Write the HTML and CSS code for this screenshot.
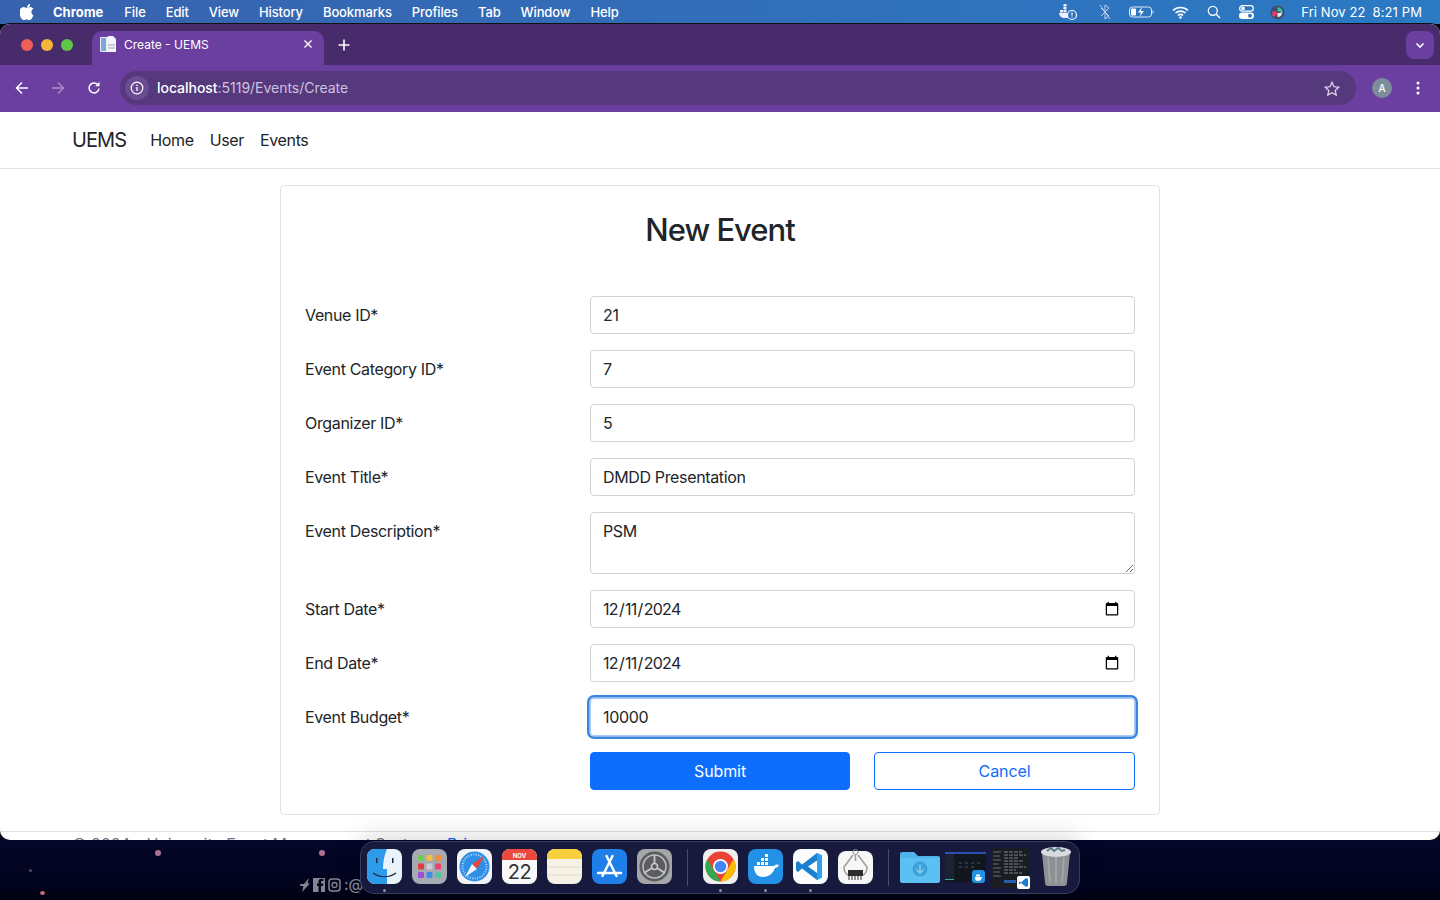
FILE: index.html
```html
<!DOCTYPE html>
<html lang="en">
<head>
    <meta charset="UTF-8">
    <title>Create - UEMS</title>
    <link rel="stylesheet" href="styles.css">
</head>
<body>
    <div class="menubar">
        <svg class="apple" viewBox="0 0 14 16" width="14" height="16"><path fill="#fff" d="M10.2 0c.1 1-.3 1.900-.8 2.600-.6.700-1.500 1.200-2.400 1.100-.1-.9.300-1.900.9-2.500C8.400.500 9.400 0 10.200 0zM13.400 11.600c-.4.900-.6 1.300-1.100 2.100-.7 1.100-1.700 2.400-2.900 2.400-1.100 0-1.400-.7-2.800-.7-1.500 0-1.800.7-2.900.7-1.200 0-2.100-1.200-2.800-2.300C-.9 10.700-1 7 .2 5.100 1 3.800 2.400 3.100 3.700 3.100c1.300 0 2.200.8 3.300.8 1 0 1.700-.8 3.200-.8 1.100 0 2.400.6 3.200 1.700-2.800 1.500-2.400 5.500 0 6.800z"/></svg>
        <span class="menu-app">Chrome</span>
        <span class="menu-item">File</span>
        <span class="menu-item">Edit</span>
        <span class="menu-item">View</span>
        <span class="menu-item">History</span>
        <span class="menu-item">Bookmarks</span>
        <span class="menu-item">Profiles</span>
        <span class="menu-item">Tab</span>
        <span class="menu-item">Window</span>
        <span class="menu-item">Help</span>
        <div class="status">
            <svg width="20" height="18" viewBox="0 0 20 18"><g fill="#eef"><rect x="2" y="7" width="3" height="2.500"/><rect x="5.500" y="7" width="3" height="2.500"/><rect x="5.500" y="4" width="3" height="2.500"/><rect x="5.500" y="1" width="3" height="2.500"/><path d="M1 10h11c-.5 3-1 5-5 5-4 0-5.500-2-6-5z"/></g><circle cx="14" cy="12" r="4.500" fill="#2f72bd" stroke="#fff" stroke-width="1.200"/><path d="M14 9.500v3M14 13.800v.9" stroke="#fff" stroke-width="1.200"/></svg>
            <svg class="st-bt" width="12" height="16" viewBox="0 0 12 16"><path d="M2 4l8 8-4 3V1l4 3-8 8M1 1l10 14" fill="none" stroke="#bcd0e8" stroke-width="1"/></svg>
            <svg class="st-bat" width="26" height="12" viewBox="0 0 26 12"><rect x=".5" y="1" width="22" height="10" rx="3" fill="none" stroke="#dce8f5"/><rect x="2" y="2.500" width="5" height="7" rx="1" fill="#fff"/><path d="M24 4.500v3" stroke="#dce8f5"/><path d="M13 1l-4 5.500h3L10.500 11l4.500-6h-3z" fill="#fff"/></svg>
            <svg class="st-wifi" width="17" height="13" viewBox="0 0 17 13"><path d="M1 4.500c4-4 11-4 15 0M3.500 7c2.800-2.600 7.200-2.600 10 0M6 9.500c1.400-1.200 3.600-1.200 5 0" fill="none" stroke="#fff" stroke-width="1.700"/><circle cx="8.500" cy="11.500" r="1.300" fill="#fff"/></svg>
            <svg class="st-search" width="14" height="14" viewBox="0 0 14 14"><circle cx="5.800" cy="5.800" r="4.500" fill="none" stroke="#fff" stroke-width="1.300"/><path d="M9 9l4 4" stroke="#fff" stroke-width="1.500"/></svg>
            <svg class="st-ctl" width="15" height="14" viewBox="0 0 15 14"><rect x=".7" y=".7" width="13.600" height="5.400" rx="2.700" fill="none" stroke="#fff" stroke-width="1.200"/><circle cx="4" cy="3.400" r="1.800" fill="#fff"/><rect y="7.500" width="15" height="6.500" rx="3.200" fill="#fff"/><circle cx="11" cy="10.700" r="1.900" fill="#2f72bd"/></svg>
            <svg class="st-siri" width="15" height="15" viewBox="0 0 15 15"><circle cx="7.500" cy="7.500" r="7" fill="#3d4f6e"/><path d="M7.500 2.500c3 0 5 2 5 4.500-2 1-3.500-.5-5-1z" fill="#3fbf9f"/><path d="M2 7c2-2 4-1 5.500 1-1 2.500-3 4.500-5 3z" fill="#e0406a"/><path d="M7.500 8c2 0 3.500 0 5-1-.5 3-2 5-5 5z" fill="#e9e4ee"/></svg>
            <span class="st-clock">Fri Nov 22</span>
            <span class="st-time">8:21 PM</span>
        </div>
    </div>

    <div class="window">
        <div class="tabstrip">
            <div class="lights"><i class="red"></i><i class="yellow"></i><i class="green"></i></div>
            <div class="tab">
                <svg width="16" height="16" viewBox="0 0 16 16"><rect x="0" y="1" width="14" height="15" rx="1" fill="#e8edf5"/><rect x="1" y="2" width="5" height="13" fill="#7fa8d8"/><path d="M9 0h4l3 3v13H7V1z" fill="#f4f5f8"/><rect x="8" y="8" width="7" height="2" fill="#c6cdd8"/><rect x="8" y="11" width="7" height="2" fill="#c6cdd8"/></svg>
                <span class="tab-title">Create - UEMS</span>
                <svg class="tab-close" width="10" height="10" viewBox="0 0 10 10"><path d="M1.500 1.500l7 7M8.500 1.500l-7 7" stroke="#fff" stroke-width="1.400"/></svg>
            </div>
            <svg class="new-tab" width="12" height="12" viewBox="0 0 12 12"><path d="M6 .5v11M.5 6h11" stroke="#fff" stroke-width="1.600"/></svg>
            <div class="tab-search"><svg width="10" height="7" viewBox="0 0 10 7"><path d="M1.500 1.500L5 5l3.500-3.500" fill="none" stroke="#fff" stroke-width="1.600"/></svg></div>
        </div>
        <div class="toolbar">
            <svg class="tool" width="14" height="14" viewBox="0 0 14 14"><path d="M13 7H2M7 1.500L1.500 7 7 12.500" fill="none" stroke="#fff" stroke-width="1.500"/></svg>
            <svg class="tool dim" width="14" height="14" viewBox="0 0 14 14"><path d="M1 7h11M7 1.500L12.500 7 7 12.500" fill="none" stroke="#a98bcb" stroke-width="1.500"/></svg>
            <svg class="tool" width="14" height="14" viewBox="0 0 14 14"><path d="M12 7.500A5 5 0 1 1 10.500 3.300" fill="none" stroke="#fff" stroke-width="1.500"/><path d="M12.500 .8v4.400H8.100z" fill="#fff"/></svg>
            <div class="omnibox">
                <span class="info"><svg width="14" height="14" viewBox="0 0 14 14"><circle cx="7" cy="7" r="5.800" fill="none" stroke="#fff" stroke-width="1.200"/><path d="M7 6v4" stroke="#fff" stroke-width="1.300"/><circle cx="7" cy="4.200" r=".8" fill="#fff"/></svg></span>
                <span class="url"><b>localhost</b>:5119/Events/Create</span>
                <svg class="star" width="16" height="15" viewBox="0 0 16 15"><path d="M8 1.300l2 4.400 4.700.5-3.500 3.200 1 4.700L8 11.700l-4.200 2.400 1-4.700L1.300 6.200 6 5.700z" fill="none" stroke="#dcd2e8" stroke-width="1.300"/></svg>
            </div>
            <span class="avatar">A</span>
            <svg class="kebab" width="4" height="14" viewBox="0 0 4 14"><circle cx="2" cy="2" r="1.500" fill="#fff"/><circle cx="2" cy="7" r="1.500" fill="#fff"/><circle cx="2" cy="12" r="1.500" fill="#fff"/></svg>
        </div>

        <div class="page">
            <nav class="navbar">
                <a class="brand">UEMS</a>
                <a class="nav-link">Home</a>
                <a class="nav-link">User</a>
                <a class="nav-link">Events</a>
            </nav>
            <main class="card">
                <h2 class="card-title">New Event</h2>
                <form class="event-form">
                    <label>Venue ID*</label>
                    <input class="field" type="text" value="21">
                    <label>Event Category ID*</label>
                    <input class="field" type="text" value="7">
                    <label>Organizer ID*</label>
                    <input class="field" type="text" value="5">
                    <label>Event Title*</label>
                    <input class="field" type="text" value="DMDD Presentation">
                    <label>Event Description*</label>
                    <textarea class="field area">PSM</textarea>
                    <label>Start Date*</label>
                    <input class="field date" type="date" value="2024-12-11">
                    <label>End Date*</label>
                    <input class="field date" type="date" value="2024-12-11">
                    <label>Event Budget*</label>
                    <input class="field focused" type="text" value="10000">
                    <div class="actions">
                        <button type="button" class="btn btn-submit">Submit</button>
                        <button type="button" class="btn btn-cancel">Cancel</button>
                    </div>
                </form>
            </main>
            <footer class="page-footer">© 2024 - University Event Management System - <a>Privacy</a></footer>
        </div>
    </div>

    <div class="desktop">
        <i class="spot" style="left:155px;top:10px"></i>
        <i class="spot" style="left:319px;top:10px"></i>
        <i class="spot small" style="left:40px;top:51px"></i>
        <i class="spot tiny" style="left:29px;top:29px"></i>
        <div class="wall-icons">
            <svg width="10" height="14" viewBox="0 0 10 14"><path d="M0 6h4L9 0 7.500 5.500H10L2 14l1.500-6H.5z" fill="#85868f"/></svg>
            <svg width="12" height="14" viewBox="0 0 12 14"><path d="M0 0h12v14H8V8h2l.3-2.500H8V4c0-.7.3-1 1-1h1.500V.8H8.500C6.500.8 5.500 2 5.500 3.800v1.700H4V8h1.500v6H0z" fill="#85868f"/></svg>
            <svg width="13" height="14" viewBox="0 0 13 14"><rect x="1" y="1" width="11" height="12" rx="3" fill="none" stroke="#85868f" stroke-width="1.500"/><circle cx="6.500" cy="7" r="2.500" fill="none" stroke="#85868f" stroke-width="1.300"/></svg>
            <span class="wall-text">:@</span>
        </div>
    </div>

    <div class="dock">
        <div class="dock-icon running">
            <svg viewBox="0 0 35 35"><rect width="35" height="35" rx="8" fill="#e9f1fa"/><path d="M8 0h12c-3 7-4 13-4 20h4v15H8a8 8 0 0 1-8-8V8a8 8 0 0 1 8-8z" fill="#2e9bea"/><path d="M6 24c7 5 16 5 23 0" fill="none" stroke="#1c2a3c" stroke-width="1.200"/><rect x="9" y="9" width="1.500" height="5" fill="#1c2a3c"/><rect x="25" y="9" width="1.500" height="5" fill="#1c2a3c"/></svg>
        </div>
        <div class="dock-icon">
            <svg viewBox="0 0 35 35"><rect width="35" height="35" rx="8" fill="#a7a9b3"/><g><rect x="6" y="6" width="6" height="6" rx="1" fill="#6fce52"/><rect x="14.500" y="6" width="6" height="6" rx="1" fill="#f2c03c"/><rect x="23" y="6" width="6" height="6" rx="1" fill="#f0913a"/><rect x="6" y="14.500" width="6" height="6" rx="1" fill="#e23c3c"/><rect x="14.500" y="14.500" width="6" height="6" rx="1" fill="#c8ccd2"/><rect x="23" y="14.500" width="6" height="6" rx="1" fill="#ea4468"/><rect x="6" y="23" width="6" height="6" rx="1" fill="#9a4fd6"/><rect x="14.500" y="23" width="6" height="6" rx="1" fill="#3d8be8"/><rect x="23" y="23" width="6" height="6" rx="1" fill="#4fc6a0"/></g></svg>
        </div>
        <div class="dock-icon">
            <svg viewBox="0 0 35 35"><rect width="35" height="35" rx="8" fill="#f2f3f5"/><circle cx="17.500" cy="17.500" r="15" fill="#2f8ee6"/><circle cx="17.500" cy="17.500" r="12" fill="none" stroke="#bcdcf6" stroke-width="2" stroke-dasharray="1 1.500"/><path d="M27 7L15 15l5 5z" fill="#e8453c"/><path d="M8 28l7-13 5 5z" fill="#f2f3f5"/></svg>
        </div>
        <div class="dock-icon">
            <svg viewBox="0 0 35 35"><rect width="35" height="35" rx="8" fill="#f8f8f8"/><path d="M0 11V8a8 8 0 0 1 8-8h19a8 8 0 0 1 8 8v3z" fill="#ea4a3e"/><text x="17.500" y="8.500" class="cal-month">NOV</text><text x="17.500" y="30" class="cal-day">22</text></svg>
        </div>
        <div class="dock-icon">
            <svg viewBox="0 0 35 35"><rect width="35" height="35" rx="8" fill="#f5f1e4"/><path d="M0 10V8a8 8 0 0 1 8-8h19a8 8 0 0 1 8 8v2z" fill="#f8cf3c"/><path d="M0 18h35M0 26h35" stroke="#ddd8c8" stroke-width=".8"/></svg>
        </div>
        <div class="dock-icon">
            <svg viewBox="0 0 35 35"><rect width="35" height="35" rx="8" fill="#1f7fe8"/><path d="M14.500 7l10 20M20.500 7l-10 20M6 24h23" stroke="#fff" stroke-width="2.400" stroke-linecap="round"/></svg>
        </div>
        <div class="dock-icon">
            <svg viewBox="0 0 35 35"><rect width="35" height="35" rx="8" fill="#a5a6a8"/><circle cx="17.500" cy="17.500" r="15" fill="#5c5d60"/><circle cx="17.500" cy="17.500" r="11.500" fill="none" stroke="#bdbec0" stroke-width="1.500"/><circle cx="17.500" cy="17.500" r="3" fill="none" stroke="#c8c9cb" stroke-width="1.500"/><path d="M17.500 14.500V6M20 19l8 5M15 19l-8 5" stroke="#c8c9cb" stroke-width="1.800"/></svg>
        </div>
        <div class="dock-sep"></div>
        <div class="dock-icon running">
            <svg viewBox="0 0 35 35"><rect width="35" height="35" rx="8" fill="#efefef"/><circle cx="17.500" cy="17.500" r="15" fill="#ea4335"/><path d="M17.500 32.500a15 15 0 0 1-13-22.500l7 12.500z" fill="#34a853"/><path d="M30.500 10a15 15 0 0 1-13 22.500l7-12z" fill="#fbbc04"/><circle cx="17.500" cy="17.500" r="7.500" fill="#fff"/><circle cx="17.500" cy="17.500" r="5.800" fill="#4285f4"/></svg>
        </div>
        <div class="dock-icon running">
            <svg viewBox="0 0 35 35"><rect width="35" height="35" rx="8" fill="#2391e6"/><path d="M6 17h20c1-1.500 3-2 5-1-1 2-2 3-4 3-2 6-7 9-12 9-6 0-9-4-9-11z" fill="#fff"/><g fill="#fff"><rect x="9" y="13" width="3" height="3"/><rect x="13" y="13" width="3" height="3"/><rect x="17" y="13" width="3" height="3"/><rect x="13" y="9" width="3" height="3"/><rect x="17" y="9" width="3" height="3"/><rect x="17" y="5" width="3" height="3"/></g></svg>
        </div>
        <div class="dock-icon running">
            <svg viewBox="0 0 35 35"><rect width="35" height="35" rx="8" fill="#fbfcfe"/><path d="M24 4l5 2.500v22L24 31 9 19.500 5 23l-2-1.500v-8L5 12l4 3.500z" fill="#1a7fd0"/><path d="M24 11.500L15 17.500l9 6.500z" fill="#fbfcfe"/><path d="M24 4l5 2.500v22L24 31z" fill="#2f9ff0"/></svg>
        </div>
        <div class="dock-icon">
            <svg viewBox="0 0 35 35"><rect y="2" width="35" height="33" rx="8" fill="#f7f7f7"/><circle cx="17.500" cy="3" r="2.500" fill="none" stroke="#8c8c8c"/><path d="M15 6L6 18c0 4 2 7 4 8M20 6l9 12c0 4-2 7-4 8M17.500 6v6" fill="none" stroke="#9c9c9c" stroke-width="1.500"/><rect x="10" y="21" width="15" height="6" fill="#2c2c2c"/><path d="M11 27v4M14 27v4M17 27v4M20 27v4M23 27v4" stroke="#555" stroke-width="1.200"/></svg>
        </div>
        <div class="dock-sep sep-right"></div>
        <div class="dock-icon folder">
            <svg viewBox="0 0 40 35"><path d="M2 3h12l4 4h20a2 2 0 0 1 2 2v22a3 3 0 0 1-3 3H3a3 3 0 0 1-3-3V5a2 2 0 0 1 2-2z" fill="#4db5ec"/><path d="M0 9h40v22a3 3 0 0 1-3 3H3a3 3 0 0 1-3-3z" fill="#5cc0f2"/><circle cx="20" cy="20" r="7.500" fill="#3ea3dc"/><path d="M20 15.500v8M16.500 20.500l3.500 3.500 3.500-3.500" fill="none" stroke="#8ed3f5" stroke-width="1.300"/></svg>
        </div>
        <div class="dock-icon stack">
            <svg viewBox="0 0 41 35"><rect y="3" width="41" height="30" fill="#11161f"/><rect y="3" width="41" height="2" fill="#2a4fb0"/><rect x="0" y="5" width="9" height="26" fill="#1b2230"/><rect y="30" width="9" height="1" fill="#3aa6a8"/><path d="M14 14h22M14 18h18" stroke="#4a5568" stroke-width="1" stroke-dasharray="3 3"/><rect x="27" y="21" width="13" height="13" rx="3" fill="#2391e6"/><path d="M30 28h7c-1 3-2 4-4 4s-3-1-3-4z" fill="#fff"/><rect x="31" y="25.500" width="4" height="2" fill="#fff"/></svg>
        </div>
        <div class="dock-icon stack second">
            <svg viewBox="0 0 38 42"><rect width="38" height="40" fill="#1a1d22"/><path d="M1 4h8M1 8h7M1 12h8M1 16h6M1 20h8M1 24h7M1 28h8" stroke="#6a7078" stroke-width="1"/><path d="M12 4h18M12 7h22M12 10h14M12 13h20M12 16h16M12 19h22M12 22h12M12 25h18" stroke="#7b8590" stroke-width="1" stroke-dasharray="4 1"/><rect x="12" y="32" width="12" height="3" fill="#2a5fb0"/><rect x="25" y="28" width="13" height="13" rx="2" fill="#fff"/><path d="M34 30l2 1v7l-2 1-5-4-2 1.500v-3l2 1z" fill="#1a7fd0"/></svg>
        </div>
        <div class="dock-icon trash">
            <svg viewBox="0 0 32 40"><path d="M2 7h28l-3 30a3 3 0 0 1-3 3H8a3 3 0 0 1-3-3z" fill="#8e9094"/><path d="M8 11l2 26M16 11v26M24 11l-2 26" stroke="#a9abaf" stroke-width="1.500"/><ellipse cx="16" cy="6" rx="15" ry="5" fill="#d8dade"/><path d="M7 5l4-3 3 3 4-3 4 3 3-1" fill="none" stroke="#5a7f8a" stroke-width="2"/></svg>
        </div>
    </div>
</body>
</html>
```
FILE: styles.css
```css
* {
    box-sizing: border-box;
}
html, body {
    height: 100%;
}
body {
    margin: 0;
    height: 900px;
    overflow: hidden;
    background: #03031d;
    font-family: Inter, "Liberation Sans", sans-serif;
    position: relative;
}

/* mac menu bar */
.menubar {
    height: 24px;
    display: flex;
    align-items: center;
    background: linear-gradient(90deg, #3862ae, #2b7ac4);
    color: #fff;
    font-size: 13px;
    padding-left: 20px;
}
.apple {
    margin-right: 19px;
}
.menu-app {
    font-weight: 700;
    margin-right: 21px;
}
.menu-item {
    margin-right: 20px;
    font-weight: 500;
    letter-spacing: -.12px;
}
.status {
    margin-left: auto;
    display: flex;
    align-items: center;
    padding-right: 18px;
    letter-spacing: .1px;
}
.st-bt { margin-left: 21px; }
.st-bat { margin-left: 18px; }
.st-wifi { margin-left: 17px; }
.st-search { margin-left: 18px; }
.st-ctl { margin-left: 18px; }
.st-siri { margin-left: 16px; }
.st-clock { margin-left: 16px; }
.st-time { margin-left: 7px; }

/* browser window */
.window {
    height: 816px;
    border-radius: 10px;
    overflow: hidden;
    background: #fff;
    display: flex;
    flex-direction: column;
    box-shadow: 0 0 0 1px #111;
}
.tabstrip {
    height: 41px;
    background: #482b6a;
    display: flex;
    align-items: flex-end;
    position: relative;
    flex: none;
}
.lights {
    width: 92px;
    height: 100%;
    display: flex;
    align-items: center;
    gap: 8px;
    padding-left: 21px;
}
.lights i {
    width: 12px;
    height: 12px;
    border-radius: 50%;
}
.red { background: #ee5f57; }
.yellow { background: #f6b63c; }
.green { background: #5ec645; }
.tab {
    width: 232px;
    height: 34px;
    background: #6b3fa0;
    border-radius: 10px 10px 0 0;
    display: flex;
    align-items: center;
    padding: 0 11px 8px 8px;
    color: #fff;
    font-size: 12px;
}
.tab-title {
    margin-left: 8px;
}
.tab-close {
    margin-left: auto;
}
.new-tab {
    margin: 0 0 14px 14px;
}
.tab-search {
    margin: 0 6px 6px auto;
    width: 28px;
    height: 28px;
    background: #6b3fa0;
    border-radius: 8px;
    display: flex;
    align-items: center;
    justify-content: center;
}
.toolbar {
    height: 47px;
    background: #6b3fa0;
    display: flex;
    align-items: center;
    padding: 0 0 1px 15px;
    flex: none;
}
.tool {
    margin-right: 22px;
}
.tool:nth-child(3) {
    margin-right: 19px;
}
.omnibox {
    width: 1236px;
    height: 34px;
    background: #56397c;
    border-radius: 17px;
    display: flex;
    align-items: center;
    padding: 0 16px 0 5px;
}
.info {
    width: 24px;
    height: 24px;
    border-radius: 50%;
    background: #6a4c91;
    display: flex;
    align-items: center;
    justify-content: center;
}
.url {
    margin: 0 0 2px 8px;
    font-size: 14px;
    letter-spacing: -.03px;
    color: #cfc2e0;
}
.url b {
    color: #fff;
    font-weight: 500;
}
.star {
    margin-left: auto;
}
.avatar {
    width: 20px;
    height: 20px;
    margin-left: 16px;
    border-radius: 50%;
    background: #7b8e99;
    color: #fff;
    font-size: 10px;
    font-weight: 500;
    display: flex;
    align-items: center;
    justify-content: center;
}
.kebab {
    margin-left: 24px;
}

/* page */
.page {
    flex: 1;
    overflow: hidden;
    color: #212529;
    font-size: 16px;
    letter-spacing: -.35px;
}
.navbar {
    height: 57px;
    border-bottom: 1px solid #dee2e6;
    display: flex;
    align-items: center;
    padding: 0 72px 0;
}
.brand {
    font-size: 20px;
    letter-spacing: -.9px;
    margin-right: 24px;
}
.nav-link {
    margin-right: 16px;
}
.card {
    width: 880px;
    height: 630px;
    margin: 16px auto;
    border: 1px solid #dee2e6;
    border-radius: 4px;
    padding: 24px;
}
.card-title {
    margin: 0 0 46px;
    font-size: 31px;
    letter-spacing: -1px;
    font-weight: 500;
    line-height: 40px;
    text-align: center;
}
.event-form {
    display: grid;
    grid-template-columns: 285px 1fr;
    row-gap: 16px;
}
.event-form label {
    line-height: 24px;
    padding-top: 7px;
}
.field {
    display: block;
    width: 100%;
    height: 38px;
    padding: 6px 12px;
    border: 1px solid #ced4da;
    border-radius: 4px;
    font: 16px/24px Inter, "Liberation Sans", sans-serif;
    letter-spacing: -.35px;
    color: #212529;
    background: #fff;
    outline: none;
}
.area {
    height: 62px;
}
.date {
    padding-left: 11px;
    letter-spacing: -.7px;
}
.focused {
    border-color: #a9c8f5;
    box-shadow: 0 0 0 .5px #dfeafa, 0 0 0 3px #3a86e0;
    border-radius: 4px;
}
.actions {
    grid-column: 2;
    display: grid;
    grid-template-columns: 260px 1fr;
    column-gap: 24px;
}
.btn {
    height: 38px;
    border-radius: 4px;
    font: 16px Inter, "Liberation Sans", sans-serif;
    letter-spacing: -.1px;
    border: 1px solid #0d6efd;
}
.btn-submit {
    background: #0d6efd;
    color: #fff;
}
.btn-cancel {
    background: #fff;
    color: #0d6efd;
}
.page-footer {
    border-top: 1px solid #dee2e6;
    padding: 0 72px;
    line-height: 24px;
    color: #6c757d;
    letter-spacing: -.08px;
}
.page-footer a {
    color: #0d6efd;
}

/* desktop behind the window */
.desktop {
    height: 60px;
    position: relative;
    background: linear-gradient(180deg, #04062a, #02031c 80%, #01010f);
}
.spot {
    position: absolute;
    width: 6px;
    height: 6px;
    border-radius: 50%;
    background: #b0708f;
}
.spot.small {
    width: 5px;
    height: 4px;
    background: #c07070;
}
.spot.tiny {
    width: 3px;
    height: 3px;
    background: #5a4464;
}
.wall-icons {
    position: absolute;
    left: 300px;
    top: 38px;
    display: flex;
    align-items: center;
    gap: 3px;
}
.wall-text {
    color: #85868f;
    font-size: 15px;
    line-height: 14px;
    font-weight: 500;
}

/* dock */
.dock {
    position: absolute;
    left: 360px;
    top: 841px;
    width: 720px;
    height: 53px;
    display: flex;
    gap: 10px;
    padding: 7px 6px 0;
    background: #171a3c;
    border: 1px solid #3a3c58;
    border-radius: 14px;
    box-shadow: 0 -6px 24px rgba(0, 0, 0, .14);
}
.dock-icon {
    width: 35px;
    height: 35px;
    flex: none;
    position: relative;
}
.dock-icon svg {
    display: block;
    width: 100%;
    height: 100%;
}
.dock-icon.running::after {
    content: "";
    position: absolute;
    left: 16px;
    top: 40px;
    width: 3px;
    height: 3px;
    border-radius: 50%;
    background: #8c8ea0;
}
.dock-sep {
    width: 1px;
    height: 37px;
    margin: 0 5px;
    background: #4a4c66;
    flex: none;
}
.sep-right {
    margin-right: 1px;
}
.folder {
    width: 40px;
}
.stack {
    width: 41px;
    margin-left: -5px;
}
.stack.second {
    width: 38px;
    margin-left: -4px;
    height: 42px;
    margin-top: -1px;
}
.trash {
    width: 32px;
    height: 40px;
    margin-top: -3px;
}
.cal-month {
    font-size: 6px;
    font-weight: 700;
    fill: #fff;
    text-anchor: middle;
}
.cal-day {
    font-size: 20px;
    fill: #333;
    text-anchor: middle;
    letter-spacing: -.5px;
}
```
